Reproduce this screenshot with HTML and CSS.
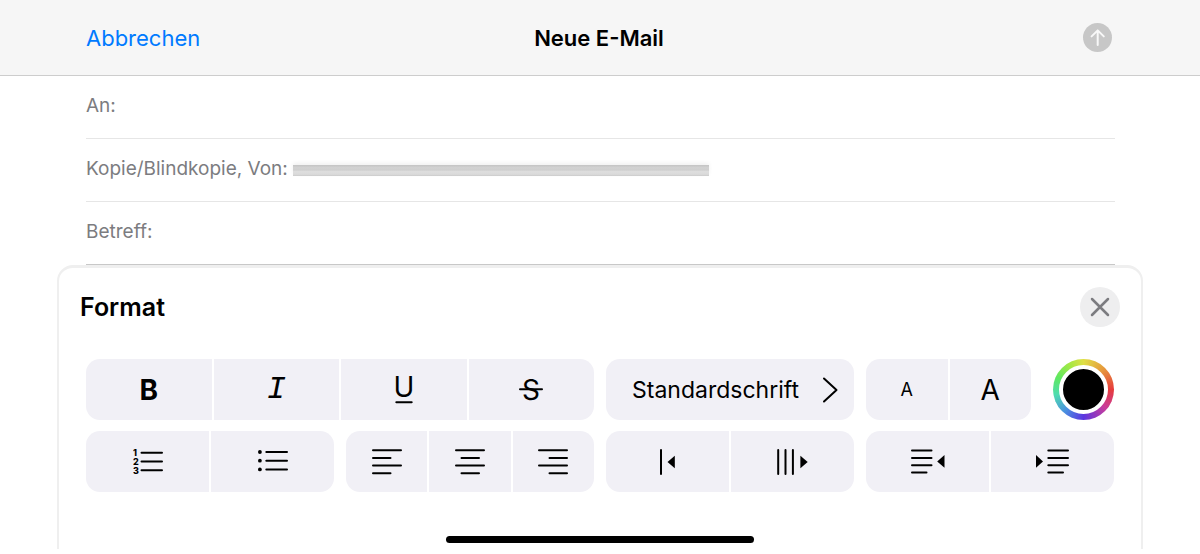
FILE: index.html
```html
<!DOCTYPE html>
<html lang="de">

<head>
    <meta charset="UTF-8">
    <meta name="viewport" content="width=device-width, initial-scale=1.0">
    <title>Neue E-Mail</title>
    <link rel="stylesheet" href="styles.css">
</head>

<body>
    <header class="header">
        <button type="button" class="cancel-btn">Abbrechen</button>
        <h1 class="title">Neue E-Mail</h1>
        <button type="button" class="send-btn" aria-label="Senden" disabled>
            <svg width="29" height="29" viewBox="0 0 29 29">
                <circle cx="14.5" cy="14.5" r="14.5" fill="#c7c7c7" />
                <path d="M14.7 22V7.6M8.6 13.4l6.1-6 6.1 6" />
            </svg>
        </button>
    </header>

    <form class="fields">
        <div class="field">
            <label for="to">An:</label>
            <input type="text" id="to">
        </div>
        <div class="field">
            <label for="cc">Kopie/Blindkopie, Von:</label>
            <span class="sender"></span>
            <input type="text" id="cc">
        </div>
        <div class="field">
            <label for="subject">Betreff:</label>
            <input type="text" id="subject">
        </div>
    </form>

    <main class="sheet">
        <div class="sheet-head">
            <h2>Format</h2>
            <button type="button" class="close-btn" aria-label="Schließen">
                <svg width="20" height="20" viewBox="0 0 20 20">
                    <path d="M2 2l16 16M18 2L2 18" />
                </svg>
            </button>
        </div>

        <div class="toolbar">
            <!-- Text style -->
            <div class="group wide">
                <button type="button" class="bold">B</button>
                <button type="button" class="italic">I</button>
                <button type="button" aria-label="Unterstrichen">
                    <svg class="letter" width="26" height="46" viewBox="0 0 26 46">
                        <text x="13" y="30">U</text>
                        <path d="M5.3 35.2H20.7" />
                    </svg>
                </button>
                <button type="button" aria-label="Durchgestrichen">
                    <svg class="letter" width="26" height="46" viewBox="0 0 26 46">
                        <text x="13" y="33">S</text>
                        <path d="M2 22.3H24" />
                    </svg>
                </button>
            </div>
            <div class="group">
                <button type="button" class="font-btn">
                    <span>Standardschrift</span>
                    <svg width="16" height="26" viewBox="0 0 16 26">
                        <path d="M2 1.5l12.5 11.5L2 24.5" />
                    </svg>
                </button>
            </div>
            <div class="size-color">
                <div class="group">
                    <button type="button" class="smaller">A</button>
                    <button type="button" class="larger">A</button>
                </div>
                <button type="button" class="color-btn" aria-label="Textfarbe"><span></span></button>
            </div>

            <!-- Lists -->
            <div class="group">
                <button type="button" aria-label="Nummerierte Liste">
                    <svg width="30" height="30" viewBox="0 0 30 30">
                        <g class="numbers">
                            <text x="0" y="9">1</text>
                            <text x="0" y="18">2</text>
                            <text x="0" y="27">3</text>
                        </g>
                        <path d="M8.5 5.7H29M8.5 14.4H29M8.5 23.2H29" />
                    </svg>
                </button>
                <button type="button" aria-label="Aufzählung">
                    <svg width="30" height="26" viewBox="0 0 30 26">
                        <g class="solid">
                            <circle cx="1.9" cy="3" r="1.9" />
                            <circle cx="1.9" cy="11.7" r="1.9" />
                            <circle cx="1.9" cy="20.4" r="1.9" />
                        </g>
                        <path d="M8.3 3H29M8.3 11.7H29M8.3 20.4H29" />
                    </svg>
                </button>
            </div>

            <!-- Alignment -->
            <div class="group">
                <button type="button" aria-label="Linksbündig">
                    <svg width="30" height="26" viewBox="0 0 30 26">
                        <path d="M1 1.3H29M1 9H18.5M1 16.6H29M1 24.2H18.5" />
                    </svg>
                </button>
                <button type="button" aria-label="Zentriert">
                    <svg width="30" height="26" viewBox="0 0 30 26">
                        <path d="M1 1.3H29M6.5 9H24M1 16.6H29M6.5 24.2H24" />
                    </svg>
                </button>
                <button type="button" aria-label="Rechtsbündig">
                    <svg width="30" height="26" viewBox="0 0 30 26">
                        <path d="M1 1.3H29M11.5 9H29M1 16.6H29M11.5 24.2H29" />
                    </svg>
                </button>
            </div>

            <!-- Quote level -->
            <div class="group">
                <button type="button" aria-label="Zitatebene verringern">
                    <svg width="16" height="26" viewBox="0 0 16 26">
                        <path d="M1 1V25" />
                        <path class="solid" d="M7.5 13l7.3-6.3v12.6z" />
                    </svg>
                </button>
                <button type="button" aria-label="Zitatebene erhöhen">
                    <svg width="32" height="26" viewBox="0 0 32 26">
                        <path d="M1.2 1V25M8.5 1V25M15.9 1V25" />
                        <path class="solid" d="M30.7 13L23.4 6.7v12.6z" />
                    </svg>
                </button>
            </div>

            <!-- Indent -->
            <div class="group">
                <button type="button" aria-label="Einzug verringern">
                    <svg width="34" height="26" viewBox="0 0 34 26">
                        <path d="M1 1.5H20.5M1 9H20.5M1 16.3H20.5M1 23.5H15.5" />
                        <path class="solid" d="M26.2 12.4l7.3-6.3v12.6z" />
                    </svg>
                </button>
                <button type="button" aria-label="Einzug erhöhen">
                    <svg width="34" height="26" viewBox="0 0 34 26">
                        <path d="M12.3 1.5H32M12.3 9H32M12.3 16.3H32M12.3 23.5H27" />
                        <path class="solid" d="M7 12.4L0 6.1v12.6z" />
                    </svg>
                </button>
            </div>
        </div>

        <div class="home-indicator"></div>
    </main>
</body>

</html>
```

FILE: styles.css
```css
* {
    margin: 0;
    padding: 0;
    box-sizing: border-box;
}

body {
    font-family: Inter, 'Liberation Sans', sans-serif;
    background-color: #fff;
    color: #000;
}

button {
    background: none;
    border: none;
    color: inherit;
    font: inherit;
    cursor: pointer;
}

svg {
    display: block;
    fill: none;
    stroke: #000;
    stroke-width: 2;
    stroke-linecap: round;
    stroke-linejoin: round;
}

.solid {
    fill: #000;
    stroke: none;
}

.header {
    display: grid;
    grid-template-columns: 1fr auto 1fr;
    align-items: center;
    height: 76px;
    padding: 0 88px 0 86px;
    background-color: #f6f6f6;
    border-bottom: 1px solid #cdcdcd;
}

.cancel-btn {
    justify-self: start;
    color: #007aff;
    font-size: 22px;
}

.title {
    font-size: 22px;
    font-weight: 600;
}

.send-btn {
    justify-self: end;
}

.send-btn svg {
    stroke: #f8f8f8;
}

.send-btn circle {
    stroke: none;
}

.fields {
    padding: 0 85px 0 86px;
}

.field {
    display: flex;
    align-items: center;
    gap: 5px;
    height: 63px;
    padding-bottom: 4px;
    border-bottom: 1px solid #e6e6e6;
    color: #7c7c80;
    font-size: 19px;
}

.field:last-child {
    border-bottom-color: #c8c8c8;
}

.field input {
    flex: 1;
    min-width: 0;
    border: none;
    outline: none;
    background: none;
    font: inherit;
}

/* Hidden sender address */
.sender {
    flex: 0 1 416px;
    height: 11px;
    margin-top: 4px;
    background: linear-gradient(#c3c3c3, #d2d2d2 25%, #cecece 45%, #dedede 60%, #dadada 85%, #cbcbcb);
    box-shadow: 0 -2px 4px #f0f0f0;
}

.sheet {
    margin: 0 57px;
    padding: 19px 19px 6px;
    border: 3px solid #efefef;
    border-width: 3px 2px 0;
    border-radius: 16px 16px 0 0;
}

.sheet-head {
    display: flex;
    justify-content: space-between;
    align-items: center;
    padding: 0 2px;
}

.sheet-head h2 {
    font-size: 25px;
    font-weight: 600;
}

.close-btn {
    display: grid;
    place-items: center;
    width: 40px;
    height: 40px;
    border-radius: 50%;
    background-color: #eeeeef;
}

.close-btn svg {
    stroke: #7c7c80;
    stroke-width: 2.5;
}

.toolbar {
    display: grid;
    grid-template-columns: repeat(4, 1fr);
    gap: 11px 12px;
    padding: 32px 8px 0;
}

.group {
    display: flex;
    flex: 1;
    gap: 2px;
    height: 61px;
    border-radius: 14px;
    overflow: hidden;
}

.group button {
    display: flex;
    flex: 1;
    justify-content: center;
    align-items: center;
    background-color: #f1f0f6;
    font-size: 28px;
}

.wide {
    grid-column: span 2;
}

.group .bold {
    font-weight: 700;
}

.group .italic {
    font-family: 'Liberation Mono', monospace;
    font-style: italic;
    font-size: 32px;
}

.letter text {
    fill: #000;
    stroke: none;
    font-size: 28px;
    text-anchor: middle;
}

.group .font-btn {
    justify-content: space-between;
    padding: 0 16px 0 26px;
    font-size: 23px;
}

.group .smaller {
    font-size: 18px;
}

.size-color {
    display: flex;
    gap: 22px;
}

.color-btn {
    width: 61px;
    height: 61px;
    padding: 6px;
    border-radius: 50%;
    background: conic-gradient(#dfdf45, #e69a3c 12%, #e63c3c 25%, #c93c9a 36%, #5b35e0 50%, #4a8fe0 61%, #4fdcb0 72%, #5fe860 82%, #a5e845 92%, #dfdf45);
}

.color-btn span {
    display: block;
    height: 100%;
    border: 4px solid #fff;
    border-radius: 50%;
    background-color: #000;
}

.numbers {
    fill: #000;
    stroke: none;
    font-size: 9px;
    font-weight: 800;
}

.home-indicator {
    width: 308px;
    height: 7px;
    margin: 44px auto 0;
    border-radius: 4px;
    background-color: #000;
}
```
